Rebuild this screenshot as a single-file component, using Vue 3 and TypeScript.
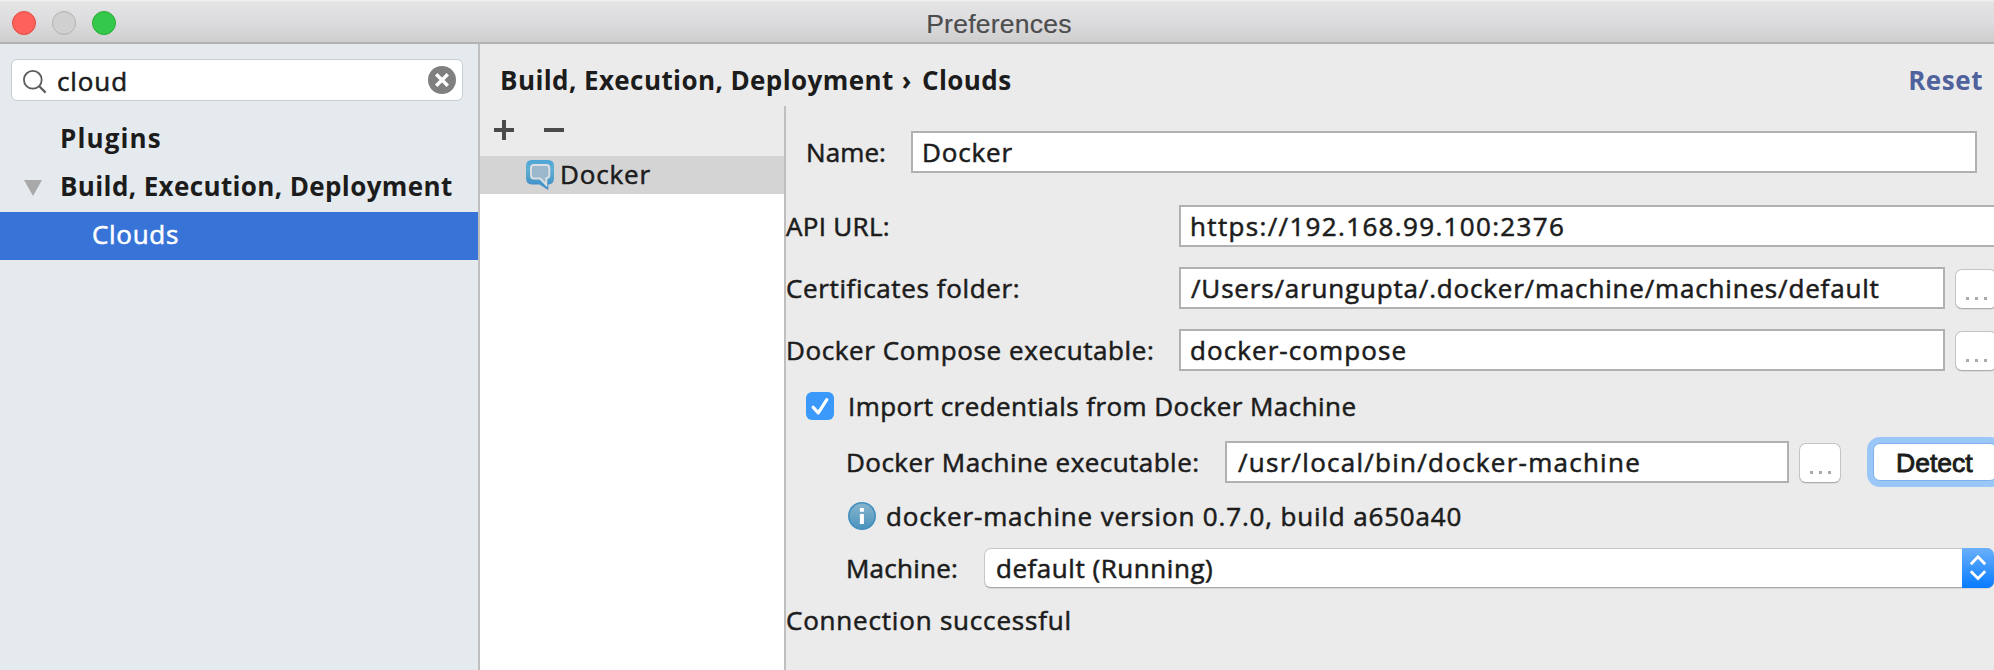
<script setup lang="ts">
import { ref } from 'vue'

const query = ref('cloud')
const configName = ref('Docker')
const apiUrl = ref('https://192.168.99.100:2376')
const certificates = ref('/Users/arungupta/.docker/machine/machines/default')
const compose = ref('docker-compose')
const machineExecutable = ref('/usr/local/bin/docker-machine')
const importCredentials = ref(true)
</script>

<template>
  <div class="window">
    <header class="titlebar">
      <div class="lights">
        <span class="light close"></span>
        <span class="light minimize"></span>
        <span class="light zoom"></span>
      </div>
      <h1 class="title">Preferences</h1>
    </header>

    <div class="body">
      <aside class="sidebar">
        <div class="search">
          <svg class="lens" width="24" height="24" viewBox="0 0 24 24" fill="none" stroke="#5c5c5c" stroke-width="1.8">
            <circle cx="9.8" cy="9.8" r="8.9" />
            <path d="M16 16L22.6 22.6" stroke-width="2.2" />
          </svg>
          <span class="query">{{ query }}</span>
          <svg class="clear" width="28" height="28" viewBox="0 0 28 28">
            <circle cx="14" cy="14" r="14" fill="#7f7f7f" />
            <path d="M8.2 8.2L19.8 19.8M19.8 8.2L8.2 19.8" stroke="#fff" stroke-width="3.4" />
          </svg>
        </div>
        <nav class="tree">
          <div class="node group plugins">Plugins</div>
          <div class="node group build">
            <svg class="arrow" width="18" height="16" viewBox="0 0 18 16"><path d="M0 0H18L9 16Z" fill="#a9a9a9" /></svg>
            <span>Build, Execution, Deployment</span>
          </div>
          <div class="node leaf selected">Clouds</div>
        </nav>
      </aside>

      <main class="main">
        <div class="heading">
          <h2 class="crumbs">Build, Execution, Deployment <span class="chevron">›</span> Clouds</h2>
          <a class="reset">Reset</a>
        </div>

        <div class="panes">
          <section class="list">
            <div class="toolbar">
              <svg width="20" height="20" viewBox="0 0 20 20"><path d="M8 0h4v8h8v4h-8v8H8v-8H0V8h8z" fill="#4a4a4a" /></svg>
              <svg width="20" height="20" viewBox="0 0 20 20"><path d="M0 8h20v4H0z" fill="#4a4a4a" /></svg>
            </div>
            <div class="entry">
              <svg class="bubble" width="28" height="30" viewBox="0 0 28 30">
                <defs>
                  <linearGradient id="bubbleFill" x1="0" y1="0" x2="0" y2="1">
                    <stop offset="0" stop-color="#4ba3d6" />
                    <stop offset="0.3" stop-color="#62b0d4" />
                    <stop offset="1" stop-color="#3788c4" />
                  </linearGradient>
                </defs>
                <path d="M6 0H22Q28 0 28 6V18Q28 24 22.3 24.6V30L13.5 24.5H6Q0 24.5 0 18V6Q0 0 6 0Z" fill="url(#bubbleFill)" />
                <path d="M8 5H20.5Q23.3 5 23.3 8V15.500Q23.300 18 20.300 18.300V25L14.200 18.500H8Q5 18.500 5 15.500V8Q5 5 8 5Z" fill="#9bb7cb" stroke="#dcdfe1" stroke-width="1.9" />
              </svg>
              <span class="docker">Docker</span>
            </div>
          </section>

          <section class="form">
            <div class="row name">
              <label class="label t-name">Name:</label>
              <div class="field docker">{{ configName }}</div>
            </div>
            <div class="row api">
              <label class="label wide t-api">API URL:</label>
              <div class="field open t-url">{{ apiUrl }}</div>
            </div>
            <div class="row spaced">
              <label class="label wide t-cert">Certificates folder:</label>
              <div class="field path t-path">{{ certificates }}</div>
              <button class="browse"><i></i><i></i><i></i></button>
            </div>
            <div class="row spaced">
              <label class="label wide t-compose">Docker Compose executable:</label>
              <div class="field path t-value">{{ compose }}</div>
              <button class="browse"><i></i><i></i><i></i></button>
            </div>
            <div class="row check">
              <svg class="box" width="28" height="28" viewBox="0 0 28 28">
                <rect width="28" height="28" rx="6" fill="#3b99fc" />
                <path v-if="importCredentials" d="M7.200 15.300L12.300 20.800L20.800 7.600" fill="none" stroke="#fff" stroke-width="3.200" stroke-linecap="round" stroke-linejoin="round" />
              </svg>
              <label class="t-import">Import credentials from Docker Machine</label>
            </div>
            <div class="row executable">
              <label class="label t-exec">Docker Machine executable:</label>
              <div class="field t-bin">{{ machineExecutable }}</div>
              <button class="browse"><i></i><i></i><i></i></button>
              <button class="detect">Detect</button>
            </div>
            <div class="row info">
              <svg class="badge" width="28" height="28" viewBox="0 0 28 28">
                <defs>
                  <linearGradient id="infoFill" x1="0" y1="0" x2="0" y2="1">
                    <stop offset="0" stop-color="#87b5cd" />
                    <stop offset="1" stop-color="#4a93bd" />
                  </linearGradient>
                </defs>
                <circle cx="14" cy="14" r="13.200" fill="url(#infoFill)" stroke="#438fbe" stroke-width="1.600" />
                <path d="M11.900 6h4v3.800h-4zM11.900 12h4v10h-4z" fill="#fff" />
              </svg>
              <span class="t-version">docker-machine version 0.7.0, build a650a40</span>
            </div>
            <div class="row machine">
              <label class="label t-machine">Machine:</label>
              <div class="select">
                <span class="t-default">default (Running)</span>
                <span class="stepper">
                  <svg width="18" height="26" viewBox="0 0 18 26" fill="none" stroke="#fff" stroke-width="2.800">
                    <path d="M1.800 9.200L9 1.800L16.200 9.200M1.800 16.200L9 23.600L16.200 16.200" />
                  </svg>
                </span>
              </div>
            </div>
            <div class="row status">
              <span class="t-status">Connection successful</span>
            </div>
          </section>
        </div>
      </main>
    </div>
  </div>
</template>

<style>
body {
  margin: 0;
  overflow: hidden;
}
</style>

<style scoped>
.window {
  width: 1994px;
  height: 670px;
  overflow: hidden;
  display: flex;
  flex-direction: column;
  background: #ebebeb;
  color: #1c1c1c;
  font: 500 26px "Open Sans", "Noto Sans", sans-serif;
  -webkit-text-stroke: 0.55px currentColor;
  white-space: nowrap;
}
.window * {
  box-sizing: border-box;
}
.titlebar {
  height: 44px;
  flex: none;
  display: grid;
  grid-template-columns: 1fr auto 1fr;
  align-items: center;
  background: linear-gradient(#f4f4f4 0, #e4e4e4 2px, #dddde0 20px, #cfcfcf 41px);
  border-bottom: 2px solid #b2b2b2;
}
.lights {
  display: flex;
  gap: 16px;
  padding: 2px 0 0 12px;
}
.light {
  width: 24px;
  height: 24px;
  border-radius: 50%;
  border: 1px solid;
}
.close {
  background: #fe605b;
  border-color: #e14942;
}
.minimize {
  background: #d0d0d0;
  border-color: #b2b2b2;
}
.zoom {
  background: #34c94a;
  border-color: #24ab35;
}
.title {
  margin: 4px 0 0 4px;
  font: 400 26.5px/40px "Liberation Sans", sans-serif;
  letter-spacing: 0.25px;
  color: #4d4d4d;
  -webkit-text-stroke: 0.2px currentColor;
}
.body {
  flex: 1;
  min-height: 0;
  display: flex;
}
.sidebar {
  width: 480px;
  flex: none;
  background: #e5eaee;
  border-right: 2px solid #bfbfbf;
}
.search {
  height: 42px;
  margin: 15px 15px 0 11px;
  padding: 0 6px 0 11px;
  display: flex;
  align-items: center;
  background: #fff;
  border: 1px solid #c9ccce;
  border-radius: 6px;
}
.lens {
  margin-top: 3px;
}
.query {
  flex: 1;
  padding: 2px 0 0 10px;
  letter-spacing: 0.9px;
}
.tree {
  margin-top: 15px;
}
.node {
  height: 48px;
  padding-bottom: 4px;
  display: flex;
  align-items: center;
}
.group {
  font-weight: 700;
  -webkit-text-stroke: 0;
}
.plugins {
  padding-left: 60px;
  letter-spacing: 1.1px;
}
.build {
  padding-left: 24px;
  letter-spacing: 0.37px;
}
.arrow {
  margin: 3px 18px 0 0;
}
.leaf {
  padding-left: 92px;
  letter-spacing: 0.71px;
}
.selected {
  background: #3874d8;
  color: #fff;
}
.main {
  flex: 1;
  min-width: 0;
  display: flex;
  flex-direction: column;
}
.heading {
  height: 62px;
  flex: none;
  padding: 14px 11px 0 20px;
  display: flex;
  justify-content: space-between;
  line-height: 44px;
  font-weight: 700;
  -webkit-text-stroke: 0;
}
.crumbs {
  margin: 0;
  font-size: inherit;
  letter-spacing: 0.41px;
}
.chevron {
  margin: 0 3px 0 1px;
}
.reset {
  color: #4f629c;
  letter-spacing: 0.55px;
}
.panes {
  flex: 1;
  min-height: 0;
  display: flex;
}
.list {
  width: 306px;
  flex: none;
  background: #fff;
  border-right: 2px solid #bfbfbf;
}
.toolbar {
  height: 50px;
  padding: 0 0 2px 14px;
  display: flex;
  align-items: center;
  gap: 30px;
  background: #ebebeb;
}
.entry {
  height: 38px;
  padding-left: 46px;
  display: flex;
  align-items: center;
  background: #d4d4d4;
}
.bubble {
  margin-right: 6px;
}
.entry .docker {
  margin-top: -2px;
}
.docker {
  letter-spacing: 0.86px;
}
.form {
  flex: 1;
  min-width: 0;
  padding-top: 25px;
}
.row {
  height: 42px;
  display: flex;
  align-items: center;
}
.label {
  flex: none;
}
.field {
  height: 42px;
  padding-left: 9px;
  line-height: 38px;
  background: #fff;
  border: 2px solid #b1b1b1;
}
.name {
  padding: 0 17px 0 20px;
}
.name .label {
  width: 105px;
}
.name .field {
  flex: 1;
}
.wide {
  width: 393px;
}
.api {
  margin-top: 32px;
}
.open {
  flex: 1;
  border-right: 0;
}
.spaced {
  margin-top: 20px;
}
.path {
  width: 766px;
  flex: none;
}
.browse {
  width: 42px;
  height: 40px;
  flex: none;
  margin: 2px 0 0 10px;
  padding: 19px 0 0;
  display: flex;
  align-items: center;
  justify-content: center;
  gap: 6px;
  background: #fff;
  border: 1px solid #c4c4c4;
  border-bottom-color: #adadad;
  border-radius: 7px;
  box-shadow: 0 1px 0 #dadada;
}
.browse i {
  width: 3px;
  height: 3px;
  background: #ababab;
}
.check {
  margin-top: 14px;
  padding-left: 20px;
}
.box {
  margin-right: 14px;
}
.executable {
  margin-top: 14px;
  padding-left: 60px;
}
.executable .label {
  width: 379px;
}
.executable .field {
  width: 564px;
  flex: none;
}
.detect {
  width: 124px;
  height: 38px;
  flex: none;
  margin-left: 32px;
  padding: 1px 0 0 22px;
  background: #fff;
  border: 1px solid #7fb1ea;
  border-radius: 7px;
  box-shadow: 0 0 0 6px #9ac7f8;
  color: #1c1c1c;
  font: 400 26.5px/34px "Liberation Sans", sans-serif;
  -webkit-text-stroke: 0.9px currentColor;
  text-align: left;
}
.info {
  margin-top: 12px;
  padding-left: 62px;
}
.badge {
  margin-right: 10px;
}
.machine {
  margin-top: 10px;
  padding-left: 60px;
}
.machine .label {
  width: 138px;
}
.select {
  height: 40px;
  flex: 1;
  padding-left: 11px;
  display: flex;
  justify-content: space-between;
  align-items: center;
  background: #fff;
  border: 1px solid #c6c6c6;
  border-right: 0;
  border-bottom-color: #a9a9a9;
  border-radius: 7px;
  box-shadow: 0 1px 0 #d6d6d6;
}
.stepper {
  width: 32px;
  height: 40px;
  display: flex;
  align-items: center;
  justify-content: center;
  background: linear-gradient(#6bb0fa, #067bff);
  border-radius: 0 7px 7px 0;
}
.status {
  margin-top: 10px;
}
.t-name { letter-spacing: 0.1px; }
.t-api { letter-spacing: 0.3px; }
.t-url { letter-spacing: 1.34px; }
.t-cert { letter-spacing: 0.63px; }
.t-path { padding-left: 10px; letter-spacing: 0.82px; }
.t-compose { letter-spacing: 0.6px; }
.t-value { letter-spacing: 1.08px; }
.t-import { letter-spacing: 0.45px; }
.t-exec { letter-spacing: 0.46px; }
.t-bin { padding-left: 11px; letter-spacing: 1.26px; }
.t-version { letter-spacing: 0.84px; }
.t-machine { letter-spacing: 0.24px; }
.t-default { letter-spacing: 0.54px; }
.t-status { letter-spacing: 0.8px; }
</style>
